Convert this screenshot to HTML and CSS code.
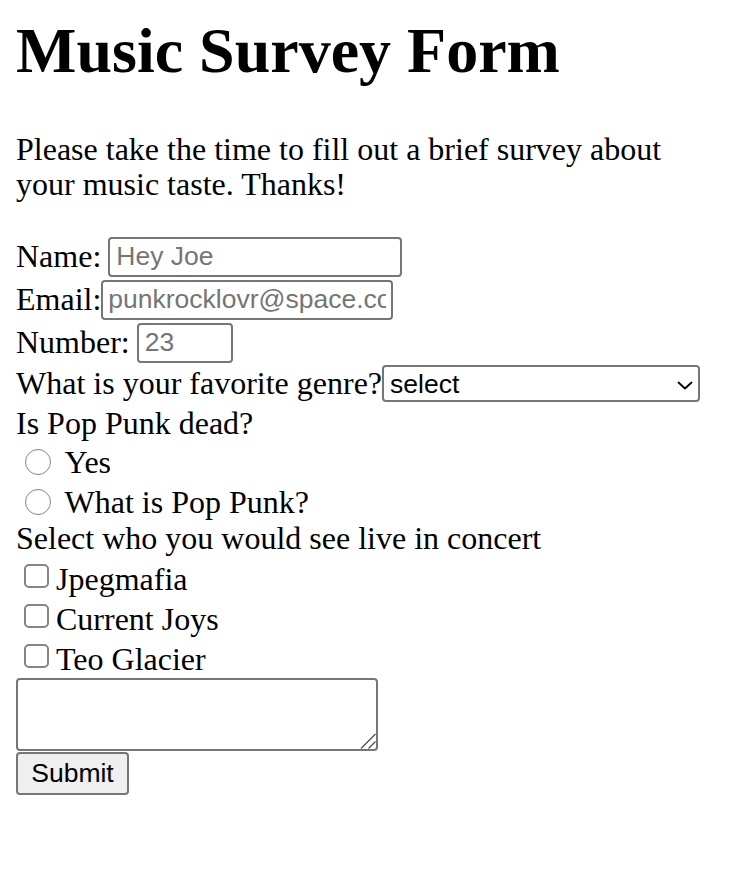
FILE: index.html
```html
<!DOCTYPE html>
<html lang="en">
<head>
<meta charset="utf-8">
<title>Music Survey Form</title>
<link rel="stylesheet" href="styles.css">
</head>
<body>
<div class="page">
  <h1 class="title">Music Survey Form</h1>
  <p class="intro">Please take the time to fill out a brief survey about your music taste. Thanks!</p>
  <form class="survey">
    <div class="field field-gap">
      <label class="field-label" for="name">Name:</label>
      <input class="text-input input-name" id="name" type="text" placeholder="Hey Joe">
    </div>
    <div class="field">
      <label class="field-label" for="email">Email:</label>
      <input class="text-input input-email" id="email" type="email" placeholder="punkrocklovr@space.com">
    </div>
    <div class="field field-gap">
      <label class="field-label" for="number">Number:</label>
      <input class="text-input input-number" id="number" type="number" placeholder="23">
    </div>
    <div class="field field-select">
      <label class="field-label" for="genre">What is your favorite genre?</label>
      <span class="select-box">
        <select class="select-input" id="genre">
          <option>select</option>
          <option>Rock</option>
          <option>Hip Hop</option>
          <option>Pop</option>
        </select>
        <svg class="select-chevron" viewBox="0 0 16 9" width="16" height="9" aria-hidden="true"><path d="M1.5 1.5 L8 7.5 L14.5 1.5" fill="none" stroke="#000" stroke-width="1.8" stroke-linecap="round" stroke-linejoin="round"/></svg>
      </span>
    </div>
    <div class="question">Is Pop Punk dead?</div>
    <label class="choice choice-radio"><input class="radio" type="radio" name="poppunk"><span class="choice-text">Yes</span></label>
    <label class="choice choice-radio"><input class="radio" type="radio" name="poppunk"><span class="choice-text">What is Pop Punk?</span></label>
    <div class="question">Select who you would see live in concert</div>
    <label class="choice choice-check"><input class="checkbox" type="checkbox"><span class="choice-text">Jpegmafia</span></label>
    <label class="choice choice-check"><input class="checkbox" type="checkbox"><span class="choice-text">Current Joys</span></label>
    <label class="choice choice-check"><input class="checkbox" type="checkbox"><span class="choice-text">Teo Glacier</span></label>
    <div class="notes">
      <textarea class="notes-input" aria-label="Comments"></textarea>
      <svg class="notes-handle" viewBox="0 0 16 16" width="16" height="16" aria-hidden="true"><path d="M1 15.5 L15.5 1 M8.5 15.5 L15.5 8.5" fill="none" stroke="#555" stroke-width="1.4"/></svg>
    </div>
    <button class="submit" type="submit">Submit</button>
  </form>
</div>
</body>
</html>
```

FILE: styles.css
```css
body {
  margin: 0;
  background: #fff;
  color: #000;
  font-family: "Liberation Serif", "Times New Roman", serif;
}

.page {
  padding: 16px 16px 0;
}

.title {
  margin: 0 0 45.2px;
  font-size: 64px;
  font-weight: 700;
  line-height: 70.8px;
}

.intro {
  margin: 0;
  max-width: 690px;
  font-size: 32px;
  line-height: 35.4px;
}

.survey {
  margin-top: 32.7px;
  display: flex;
  flex-direction: column;
  align-items: flex-start;
  font-size: 32px;
  line-height: 35.4px;
}

.field {
  display: flex;
  align-items: center;
  height: 43px;
}

.field-gap {
  gap: 7px;
}

.field-select {
  height: 39px;
}

.field-label {
  padding-bottom: 0.6px;
}

.text-input {
  box-sizing: border-box;
  height: 40px;
  margin: 0;
  padding: 0 6px;
  border: 2px solid #767676;
  border-radius: 4px;
  background: #fff;
  color: #000;
  font: 26.5px "Liberation Sans", Arial, sans-serif;
}

.text-input::placeholder {
  color: #757575;
}

.input-email {
  width: 292px;
  padding: 0 5px;
}

.input-name {
  width: 294px;
}

.input-number {
  width: 96px;
  -moz-appearance: textfield;
}

.input-number::-webkit-inner-spin-button,
.input-number::-webkit-outer-spin-button {
  -webkit-appearance: none;
  margin: 0;
}

.select-box {
  position: relative;
  display: inline-flex;
}

.select-input {
  -webkit-appearance: none;
  appearance: none;
  box-sizing: border-box;
  width: 318px;
  height: 37px;
  margin: 0;
  padding: 0 30px 0 6px;
  border: 2px solid #767676;
  border-radius: 4px;
  background: #fff;
  color: #000;
  font: 26.5px "Liberation Sans", Arial, sans-serif;
}

.select-chevron {
  position: absolute;
  right: 7px;
  top: 15.5px;
  pointer-events: none;
}

.question {
  box-sizing: border-box;
  height: 35.4px;
  padding-top: 2.5px;
}

.choice {
  display: flex;
  align-items: center;
  height: 40px;
}

.radio {
  -webkit-appearance: none;
  appearance: none;
  box-sizing: border-box;
  width: 26px;
  height: 26px;
  margin: 7.2px 13.5px 0 9px;
  border: 1.8px solid #858585;
  border-radius: 50%;
  background: #fff;
}

.choice-radio .choice-text {
  padding-top: 8.5px;
}

.checkbox {
  -webkit-appearance: none;
  appearance: none;
  box-sizing: border-box;
  width: 25px;
  height: 24px;
  margin: 4.4px 7px 0 8px;
  border: 2px solid #858585;
  border-radius: 5px;
  background: #fff;
}

.choice-check .choice-text {
  padding-top: 10.4px;
}

.notes {
  position: relative;
  margin-top: 3.7px;
  width: 362px;
  height: 73px;
}

.notes-input {
  display: block;
  box-sizing: border-box;
  width: 362px;
  height: 73px;
  margin: 0;
  padding: 4px;
  border: 2px solid #767676;
  border-radius: 4px;
  resize: none;
  font: 26.5px "Liberation Mono", monospace;
}

.notes-handle {
  position: absolute;
  right: 2px;
  bottom: 2px;
  pointer-events: none;
}

.submit {
  box-sizing: border-box;
  width: 113px;
  height: 43px;
  margin-top: 1px;
  padding: 0;
  border: 2px solid #767676;
  border-radius: 4px;
  background: #efefef;
  color: #000;
  font: 26.5px "Liberation Sans", Arial, sans-serif;
}
```
